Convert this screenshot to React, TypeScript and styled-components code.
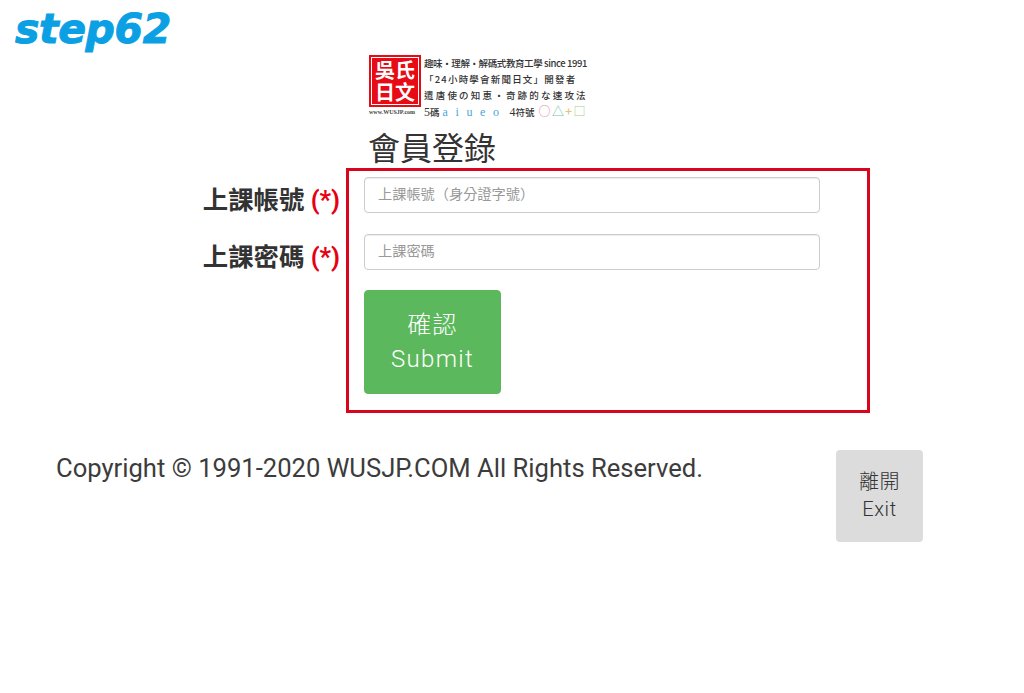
import React from "react";
import styled, { createGlobalStyle } from "styled-components";

const CJK = `Roboto, "Noto Sans CJK TC", sans-serif`;

const Global = createGlobalStyle`
  html, body { margin: 0; padding: 0; background: #fff; }
  body { font-family: ${CJK}; color: #333; }
  input::placeholder { color: #999; opacity: 1; }
`;

const Page = styled.div`
  width: 1024px;
  height: 693px;
  overflow: hidden;
  display: flex;
  flex-direction: column;
`;

const Brand = styled.div`
  height: 55px;
  padding: 7px 0 0 15px;
  box-sizing: border-box;
  font: italic 700 41px/44px "DejaVu Sans", sans-serif;
  color: #0b9fe3;
  letter-spacing: -0.4px;
  -webkit-text-stroke: 1px #0b9fe3;
`;

const Head = styled.div`
  padding-left: 369px;
  display: flex;
  flex-direction: column;
`;

const Banner = styled.div`
  width: 220px;
  height: 63px;
  display: flex;
  gap: 3px;
`;

const Seal = styled.div`
  display: flex;
  flex-direction: column;
  width: 52px;
`;

const SealBox = styled.div`
  width: 52px;
  height: 52px;
  box-sizing: border-box;
  background: #e60b14;
  border: 1px solid #e60b14;
  outline: 1px solid #fff;
  outline-offset: -3px;
  color: #fff;
  font: 700 20px/22px "Noto Sans CJK TC", sans-serif;
  text-align: center;
  padding-top: 3px;
`;

const SealUrl = styled.div`
  font: 700 6px/11px "Liberation Serif", serif;
  white-space: nowrap;
  color: #444;
`;

const Lines = styled.div`
  display: flex;
  flex-direction: column;
  font: 500 9.5px/16px "Noto Sans CJK TC", serif;
  color: #333;
  white-space: nowrap;
`;

const Line = styled.div<{ $spacing?: number }>`
  height: 16px;
  letter-spacing: ${(p) => p.$spacing ?? 0}px;
`;

const Digit = styled.span`
  font: 400 12px "Liberation Serif", serif;
`;

const Vowels = styled.span`
  color: #4ba6d8;
  font: 400 12px "Liberation Serif", serif;
  letter-spacing: 7.6px;
  margin: 0 3px;
`;

const Marks = styled.span`
  font-size: 12px;
  letter-spacing: 1.4px;
  margin-left: 4px;
`;

const Circle = styled.span`
  color: #e58aa0;
`;

const Triangle = styled.span`
  color: #6cc5a8;
`;

const Plus = styled.span`
  color: #e8c27a;
`;

const Square = styled.span`
  color: #9fd08a;
`;

const Title = styled.h1`
  margin: 13px 0 0 -1px;
  font: 400 32px/37px ${CJK};
  color: #333;
  height: 37px;
`;

const FormRow = styled.div`
  display: flex;
  height: 245px;
`;

const Labels = styled.div`
  width: 346px;
  padding-right: 6px;
  box-sizing: border-box;
  display: flex;
  flex-direction: column;
  align-items: flex-end;
  padding-top: 15px;
  gap: 23px;
`;

const Label = styled.label`
  font: 700 25.4px/34px ${CJK};
  color: #333;
  white-space: nowrap;
`;

const Req = styled.span`
  color: #e60012;
`;

const Box = styled.form`
  width: 524px;
  height: 245px;
  box-sizing: border-box;
  border: 3px solid #d8051f;
  padding: 6px 0 0 15px;
  display: flex;
  flex-direction: column;
  align-items: flex-start;
  gap: 21px;
`;

const Field = styled.input`
  width: 456px;
  height: 36px;
  box-sizing: border-box;
  border: 1px solid #ccc;
  border-radius: 4px;
  padding: 0 13px 2px;
  font: 400 14.2px ${CJK};
  color: #555;
  background: #fff;
  box-shadow: inset 0 1px 1px rgba(0, 0, 0, 0.075);
  outline: none;
`;

const Submit = styled.button`
  width: 137px;
  height: 104px;
  border: 1px solid #5cb85c;
  border-radius: 4px;
  background: #5cb85c;
  color: #fff;
  font: 300 24px/34px ${CJK};
  letter-spacing: 1.3px;
  padding: 0;
  margin-top: -1px;
`;

const Footer = styled.div`
  margin-top: 37px;
  padding-left: 56px;
  display: flex;
  align-items: flex-start;
`;

const Copy = styled.div`
  width: 780px;
  font: 400 25.6px/34px Roboto, sans-serif;
  color: #3c3c3c;
  padding-top: 1px;
  white-space: nowrap;
`;

const Exit = styled.button`
  width: 87px;
  height: 92px;
  border: none;
  border-radius: 4px;
  background: #dcdcdc;
  color: #333;
  font: 300 20px/27px ${CJK};
  letter-spacing: 0.6px;
  padding: 0;
`;

export default function App() {
  return (
    <Page>
      <Global />
      <Brand>step62</Brand>
      <Head>
        <Banner>
          <Seal>
            <SealBox>
              吳氏
              <br />
              日文
            </SealBox>
            <SealUrl>www.WUSJP.com</SealUrl>
          </Seal>
          <Lines>
            <Line $spacing={-0.4}>趣味‧理解‧解碼式教育工學 since 1991</Line>
            <Line $spacing={1.2}>「24小時學會新聞日文」開發者</Line>
            <Line $spacing={2.2}>遣唐使の知恵‧奇跡的な速攻法</Line>
            <Line>
              <Digit>5</Digit>碼
              <Vowels>aiueo</Vowels>
              <Digit>4</Digit>符號
              <Marks>
                <Circle>○</Circle>
                <Triangle>△</Triangle>
                <Plus>+</Plus>
                <Square>□</Square>
              </Marks>
            </Line>
          </Lines>
        </Banner>
        <Title>會員登錄</Title>
      </Head>
      <FormRow>
        <Labels>
          <Label>
            上課帳號 <Req>(*)</Req>
          </Label>
          <Label>
            上課密碼 <Req>(*)</Req>
          </Label>
        </Labels>
        <Box>
          <Field placeholder="上課帳號（身分證字號）" />
          <Field placeholder="上課密碼" type="text" />
          <Submit type="button">
            確認
            <br />
            Submit
          </Submit>
        </Box>
      </FormRow>
      <Footer>
        <Copy>Copyright © 1991-2020 WUSJP.COM All Rights Reserved.</Copy>
        <Exit type="button">
          離開
          <br />
          Exit
        </Exit>
      </Footer>
    </Page>
  );
}
